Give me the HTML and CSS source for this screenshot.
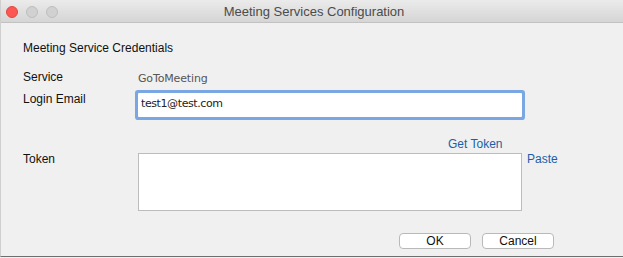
FILE: index.html
```html
<!DOCTYPE html>
<html>
<head>
<meta charset="utf-8">
<link rel="stylesheet" href="styles.css">
</head>
<body>
<div class="window">
  <div class="titlebar">
    <div class="lights">
      <span class="light red"></span>
      <span class="light gray"></span>
      <span class="light gray"></span>
    </div>
    <div class="title">Meeting Services Configuration</div>
  </div>
  <div class="content">
    <div class="heading">Meeting Service Credentials</div>
    <div class="row service-row">
      <div class="label">Service</div>
      <div class="value">GoToMeeting</div>
    </div>
    <div class="row email-row">
      <div class="label">Login Email</div>
      <div class="input focused">test1@test.com</div>
    </div>
    <div class="gettoken-row">
      <span class="link">Get Token</span>
    </div>
    <div class="row token-row">
      <div class="label">Token</div>
      <div class="textarea"></div>
      <span class="link paste">Paste</span>
    </div>
    <div class="buttons">
      <button class="btn">OK</button>
      <button class="btn">Cancel</button>
    </div>
  </div>
</div>
</body>
</html>
```
FILE: styles.css
```css
* { box-sizing: border-box; }
html, body { margin: 0; padding: 0; }
body {
  width: 623px;
  height: 258px;
  overflow: hidden;
  background: #f0f0f0;
  font-family: "Liberation Sans", Arial, sans-serif;
  font-size: 12px;
  color: #111;
}
.window {
  width: 623px;
  height: 257px;
  border-left: 1px solid #cfcfcf;
  border-bottom: 1px solid #6e6e6e;
  background: #f0f0f0;
  display: flex;
  flex-direction: column;
}
.titlebar {
  height: 23px;
  flex: none;
  background: linear-gradient(#ebebeb, #d5d5d5);
  border-bottom: 1px solid #c2c2c2;
  display: flex;
  align-items: center;
  position: relative;
}
.lights {
  display: flex;
  gap: 8px;
  padding-left: 5px;
  padding-top: 2px;
}
.light {
  width: 12px;
  height: 12px;
  border-radius: 50%;
  display: block;
}
.light.red { background: #fc5753; border: 1px solid #df4744; }
.light.gray { background: #d1d1d1; border: 1px solid #bebebe; }
.title {
  position: absolute;
  left: 4px;
  right: 0;
  top: 4px;
  text-align: center;
  font-size: 13px;
  color: #4b4b4b;
  line-height: 16px;
}
.content {
  padding: 18px 0 0 22px;
}
.heading {
  line-height: 15px;
  height: 15px;
}
.row {
  display: flex;
  align-items: flex-start;
}
.label {
  width: 115px;
  flex: none;
  line-height: 15px;
}
.service-row {
  margin-top: 14px;
  height: 15px;
}
.value {
  font-family: "DejaVu Sans", sans-serif;
  font-size: 11px;
  letter-spacing: -0.15px;
  color: #555;
  line-height: 15px;
  padding-top: 1px;
}
.email-row {
  margin-top: 7px;
}
.input {
  width: 384px;
  height: 24px;
  margin-top: 1px;
  background: #fff;
  padding-left: 3px;
  font-family: "DejaVu Sans", sans-serif;
  font-size: 11px;
  letter-spacing: -0.4px;
  color: #222;
  line-height: 21px;
}
.input.focused {
  border-radius: 1px;
  box-shadow: 0 0 0 3px #7aa6e4;
}
.gettoken-row {
  margin-top: 20px;
  padding-left: 425px;
  line-height: 15px;
  height: 15px;
}
.link {
  color: #1d5ea8;
  line-height: 15px;
}
.textarea {
  width: 384px;
  height: 58px;
  margin-top: 1px;
  background: #fff;
  border: 1px solid #bcbcbc;
  flex: none;
}
.paste {
  margin-left: 5px;
}
.buttons {
  margin-top: 22px;
  padding-left: 376px;
  display: flex;
  gap: 11px;
}
.btn {
  width: 72px;
  height: 16px;
  padding: 0;
  background: #fff;
  border: 1px solid #b9b9b9;
  border-radius: 4px;
  font-family: "Liberation Sans", Arial, sans-serif;
  font-size: 12px;
  color: #111;
  line-height: 14px;
}
```
